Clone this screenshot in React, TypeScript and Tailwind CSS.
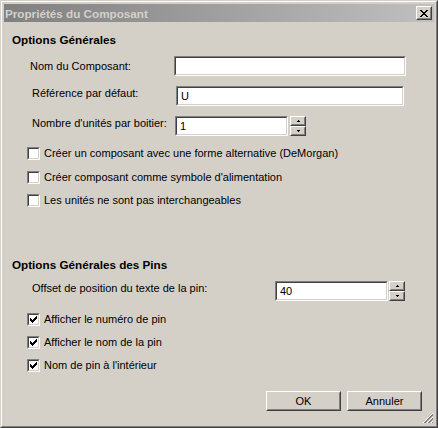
import React from 'react';

const FONT = "font-['Liberation_Sans',Arial,sans-serif]";

function Sunken({ className, children }: { className: string; children?: React.ReactNode }) {
  return (
    <div className={`border border-t-[#808080] border-l-[#808080] border-r-white border-b-white ${className}`}>
      <div className="h-full border border-t-[#404040] border-l-[#404040] border-r-[#d4d0c8] border-b-[#d4d0c8] bg-white flex items-center px-[3px]">
        {children}
      </div>
    </div>
  );
}

function Raised({ className, children }: { className: string; children?: React.ReactNode }) {
  return (
    <div className={`border border-t-white border-l-white border-r-[#404040] border-b-[#404040] ${className}`}>
      <div className="h-full border border-t-[#d4d0c8] border-l-[#d4d0c8] border-r-[#808080] border-b-[#808080] bg-[#d4d0c8] flex items-center justify-center">
        {children}
      </div>
    </div>
  );
}

function Spinner() {
  return (
    <div className="flex flex-col">
      <Raised className="w-[16px] h-[10px]">
        <svg width="5" height="3" viewBox="0 0 5 3" shapeRendering="crispEdges">
          <rect x="2" y="0" width="1" height="1" fill="#000" />
          <rect x="1" y="1" width="3" height="1" fill="#000" />
        </svg>
      </Raised>
      <Raised className="w-[16px] h-[10px]">
        <svg width="5" height="3" viewBox="0 0 5 3" shapeRendering="crispEdges">
          <rect x="1" y="0" width="3" height="1" fill="#000" />
          <rect x="2" y="1" width="1" height="1" fill="#000" />
        </svg>
      </Raised>
    </div>
  );
}

function CheckBox({ checked }: { checked?: boolean }) {
  return (
    <div className="w-[13px] h-[13px] border border-t-[#808080] border-l-[#808080] border-r-white border-b-white">
      <div className="w-full h-full border border-t-[#404040] border-l-[#404040] border-r-[#d4d0c8] border-b-[#d4d0c8] bg-white flex items-center justify-center">
        {checked && (
          <svg width="7" height="7" viewBox="0 0 7 7" shapeRendering="crispEdges">
            <rect x="6" y="0" width="1" height="1" fill="#000" />
            <rect x="5" y="1" width="2" height="1" fill="#000" />
            <rect x="0" y="2" width="1" height="1" fill="#000" />
            <rect x="4" y="2" width="3" height="1" fill="#000" />
            <rect x="0" y="3" width="2" height="1" fill="#000" />
            <rect x="3" y="3" width="3" height="1" fill="#000" />
            <rect x="0" y="4" width="5" height="1" fill="#000" />
            <rect x="1" y="5" width="3" height="1" fill="#000" />
            <rect x="2" y="6" width="1" height="1" fill="#000" />
          </svg>
        )}
      </div>
    </div>
  );
}

function CheckRow({ label, checked, className }: { label: string; checked?: boolean; className: string }) {
  return (
    <div className={`flex items-center h-[13px] pl-[23px] ${className}`}>
      <CheckBox checked={checked} />
      <span className="ml-[4px] leading-[13px]">{label}</span>
    </div>
  );
}

export default function App() {
  return (
    <div className={`w-[438px] h-[428px] bg-[#d4d0c8] text-[11px] leading-[13px] text-black ${FONT}`}>
      <div className="w-full h-full border border-t-[#d4d0c8] border-l-[#d4d0c8] border-r-[#404040] border-b-[#404040]">
        <div className="w-full h-full border border-t-white border-l-white border-r-[#808080] border-b-[#808080] p-[2px] flex flex-col">
          {/* title bar */}
          <div className="h-[18px] flex items-center justify-between bg-gradient-to-r from-[#808080] to-[#c0c0c0] pl-[1px] pr-[2px]">
            <span className="font-bold text-[#d4d0c8] text-[11.7px]">Propriétés du Composant</span>
            <Raised className="w-[16px] h-[14px]">
              <svg width="8" height="7" viewBox="0 0 8 7" shapeRendering="crispEdges">
                <path d="M0 0h2v1h-2zM6 0h2v1h-2zM1 1h2v1h-2zM5 1h2v1h-2zM2 2h4v1h-4zM3 3h2v1h-2zM2 4h4v1h-4zM1 5h2v1h-2zM5 5h2v1h-2zM0 6h2v1h-2zM6 6h2v1h-2z" fill="#000" />
              </svg>
            </Raised>
          </div>

          {/* content */}
          <div className="flex-1 flex flex-col">
            <div className="mt-[11px] pl-[8px] font-bold text-[11.7px]">Options Générales</div>

            <div className="mt-[10px] flex items-center">
              <span className="pl-[26px] w-[170px]">Nom du Composant:</span>
              <Sunken className="w-[232px] h-[20px]" />
            </div>

            <div className="mt-[10px] flex items-start">
              <span className="pl-[28px] w-[172px] mt-[1px]">Référence par défaut:</span>
              <Sunken className="w-[228px] h-[20px]">
                <span>U</span>
              </Sunken>
            </div>

            <div className="mt-[10px] flex items-start">
              <span className="pl-[28px] w-[171px] mt-[1px]">Nombre d'unités par boitier:</span>
              <Sunken className="w-[113px] h-[20px]">
                <span>1</span>
              </Sunken>
              <div className="ml-[2px]">
                <Spinner />
              </div>
            </div>

            <CheckRow className="mt-[11px]" label="Créer un composant avec une forme alternative (DeMorgan)" />
            <CheckRow className="mt-[11px]" label="Créer composant comme symbole d'alimentation" />
            <CheckRow className="mt-[10px]" label="Les unités ne sont pas interchangeables" />

            <div className="mt-[51px] pl-[8px] font-bold text-[11.7px]">Options Générales des Pins</div>

            <div className="mt-[10px] flex items-start">
              <span className="pl-[28px] w-[271px] mt-[1px]">Offset de position du texte de la pin:</span>
              <Sunken className="w-[113px] h-[20px]">
                <span>40</span>
              </Sunken>
              <div className="ml-[1px]">
                <Spinner />
              </div>
            </div>

            <CheckRow className="mt-[12px]" checked label="Afficher le numéro de pin" />
            <CheckRow className="mt-[10px]" checked label="Afficher le nom de la pin" />
            <CheckRow className="mt-[10px]" checked label="Nom de pin à l'intérieur" />

            <div className="mt-[19px] flex justify-end gap-[6px] pr-[12px]">
              <Raised className="w-[75px] h-[20px]">OK</Raised>
              <Raised className="w-[75px] h-[20px]">Annuler</Raised>
            </div>

            <div className="flex-1 flex items-end justify-end">
              <svg width="12" height="12" viewBox="0 0 12 12" shapeRendering="crispEdges">
                <path d="M11 1L1 11M11 5L5 11M11 9L9 11" stroke="#ffffff" strokeWidth="1" />
                <path d="M11 2L2 11M11 3L3 11M11 6L6 11M11 7L7 11M11 10L10 11" stroke="#808080" strokeWidth="1" />
              </svg>
            </div>
          </div>
        </div>
      </div>
    </div>
  );
}
